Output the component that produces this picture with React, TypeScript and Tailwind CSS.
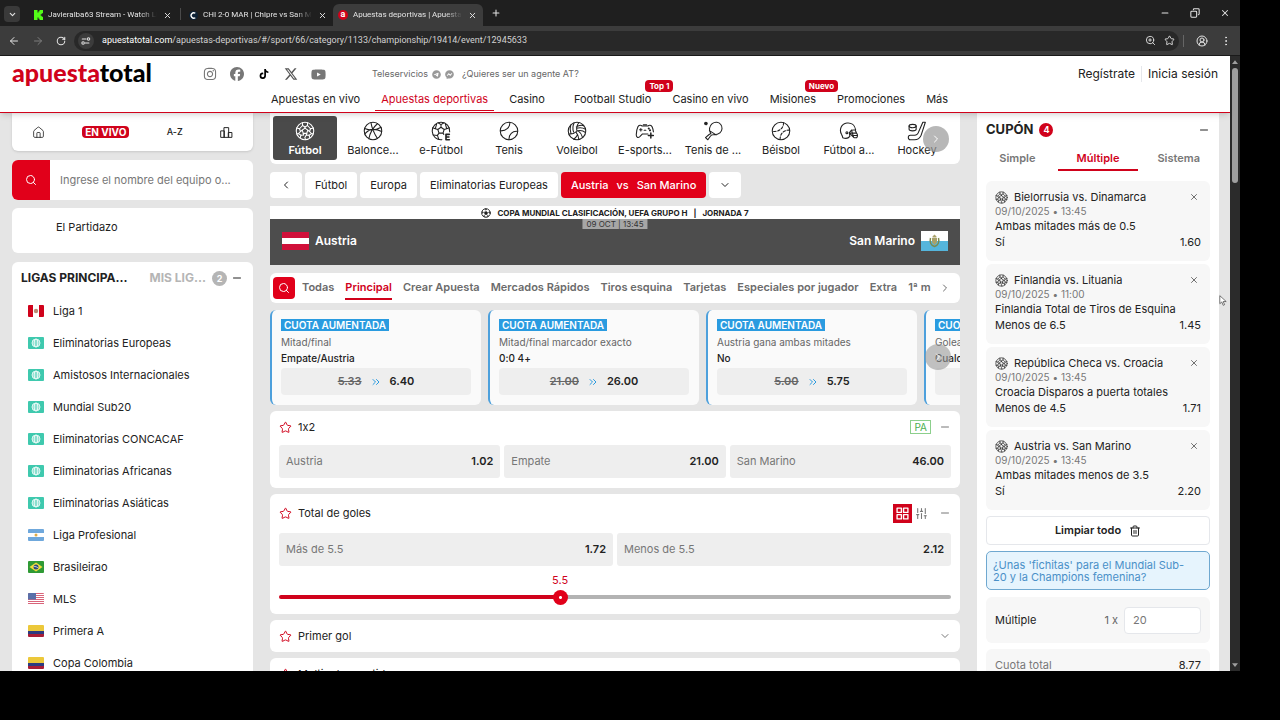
import { useState } from "react"
import type { ReactNode } from "react"
import {
  ArrowLeft,
  ArrowRight,
  ChevronDown,
  ChevronLeft,
  ChevronRight,
  ChevronsRight,
  CircleUserRound,
  Copy,
  EllipsisVertical,
  House,
  Minus,
  Plus,
  RotateCw,
  Search,
  SlidersVertical,
  Star,
  Trash2,
  X,
  ZoomIn,
} from "lucide-react"
import { FaFacebook, FaInstagram, FaTiktok, FaTelegram, FaFacebookMessenger, FaXTwitter, FaYoutube } from "react-icons/fa6"

/* ---------- Icons ---------- */

function Icon({ children, className = "size-5" }: { children: ReactNode; className?: string }) {
  return (
    <svg
      viewBox="0 0 24 24"
      fill="none"
      stroke="currentColor"
      strokeWidth="1.3"
      strokeLinecap="round"
      strokeLinejoin="round"
      className={className}
      aria-hidden="true"
    >
      {children}
    </svg>
  )
}

function BallIcon({ className = "size-5" }: { className?: string }) {
  return (
    <Icon className={className}>
      <circle cx="12" cy="12" r="10.5" />
      <path d="M12 8.600l3.300 2.400-1.200 3.800H9.900L8.700 11z" />
      <path d="M9 2.200v3.200l3 1.800 3-1.800V2.200M22 8.500l-3.400.8-1.200 3.300 2.400 2.600 2 .2M17.800 20.300l-.9-3.200-3.300-.4-1.800 3 .8 2.600M6.200 20.300l.9-3.200 3.300-.4M2 8.500l3.400.8 1.200 3.300-2.400 2.600-2 .2" />
      <path d="M12 7.200v1.400M15.300 11l2.100 1.600M14.100 14.800l-.5 1.900M9.900 14.800l.5 1.900M8.700 11l-2.100 1.600M15 5.400l3.600 3.900M9 5.400L5.400 9.300M19.800 15.200l-2.900 1.900M4.200 15.200l2.900 1.900" />
    </Icon>
  )
}

function BasketballIcon() {
  return (
    <Icon>
      <circle cx="12" cy="12" r="10.5" />
      <path d="M9.5 1.800c1 6 3.800 13 7.800 19.300M2 9c6 2.500 13 2.500 19.800-1.500M17.500 3c-5 4.500-9 10-10.500 18.300M2.200 15.500C7 9.500 14 8.500 22.300 12.500" />
    </Icon>
  )
}

function EFootballIcon() {
  return (
    <Icon>
      <path d="M13 22.400A10.500 10.500 0 1 1 22.400 13" />
      <path d="M12 7.500l3.800 2.700-1.400 4.300H9.600l-1.400-4.300zM12 7.500V4.400L8.500 2.100M12 4.400l3.500-2.300M15.800 10.200l3-1 3-1M18.800 9.200l-1.500-5.500M8.200 10.200l-3-1-3.100-1M5.200 9.200l1.500-5.500M9.600 14.500l-1.900 2.800-5-.6M7.700 17.300l1.600 4.500M14.400 14.500l1 1.500" />
      <path d="M22 16h-4v6.500h4M18 19.200h3.500" strokeWidth="2" />
    </Icon>
  )
}

function TennisIcon() {
  return (
    <Icon>
      <circle cx="12" cy="12" r="10.500" />
      <path d="M13 1.600c.5 5.500-4 10.500-11.300 10.200M22.300 12.500c-6-.8-10.800 3.500-10.300 10" />
    </Icon>
  )
}

function VolleyballIcon() {
  return (
    <Icon>
      <circle cx="12" cy="12" r="10.500" />
      <path d="M12 12c-1-4 0-7.500 2.500-10.200M12 12c4-1.200 7.500-.3 10.300 2M12 12c-2.800 3-6.300 4-9.600 3.500M8.500 2.300c-1.800 3.500-1.800 7.500-.5 11M4.500 5c-1 3-1 6.500.2 9.800M20.200 5.600c-3.200-1-6.300-.5-9 1.500M22.300 9.800c-3.500-2-7-2.200-10.800-1.200M18.800 19.900c-.8-3.200-2.500-6-5.300-8M14.200 22.300c-.2-3.800-1.400-6.600-3.400-9M8 21.700c2-1.400 3.500-3 4.500-5" />
    </Icon>
  )
}

function GamepadIcon() {
  return (
    <Icon>
      <path d="M15.500 15.500H9L5.500 19c-2 1.500-4 .5-4-2.500.2-4 1-7.500 2-9.500C4.500 5 7 4.500 8.500 6h7c1.500-1.500 4-1 5 1 .7 1.500 1.300 3.500 1.600 6M10 4.500h4M5.500 10.500h3M7 9v3M11 11h2" />
      <path d="M19 14.500v6M16 17.500h6" strokeWidth="1.800" />
      <circle cx="16.500" cy="9" r=".6" fill="currentColor" />
      <circle cx="18" cy="11.200" r=".6" fill="currentColor" />
    </Icon>
  )
}

function PingPongIcon() {
  return (
    <Icon>
      <path d="M9.500 15.500C6.500 11.500 7.500 6 11 3.200c3.500-2.700 8-2 10.300 1 2.400 3 2 7.300-1 10-2.500 2.200-5.300 2.500-8.300 2.300-1.500 0-2.300.6-3.200 1.800l-3 4.200L3 20l4-3.500c1-.8 2-1.500 2.500-1zM7.700 11.500l8 5.200" />
      <circle cx="3.500" cy="3" r="1.500" fill="currentColor" />
    </Icon>
  )
}

function BaseballIcon() {
  return (
    <Icon>
      <circle cx="12" cy="12" r="10.500" />
      <path d="M15 2c.5 6-5 11.500-13.300 10.500M22.300 11c-7-.5-11.800 4.500-11.300 11.400" strokeDasharray="3 2" />
    </Icon>
  )
}

function HelmetIcon() {
  return (
    <Icon>
      <path d="M13 18.500c-2 2.500-5.500 2.800-8.500 1.500-.2-1.500-.5-2.500-1.500-4C0 10.500 2.500 3.500 9.500 2.500c5.500-.8 9.500 2.500 10.500 8l-5 .5-2.500 3z" />
      <path d="M12.500 14.500h8.500c1.300 1.500 1.300 4 .3 5.500H18l-5-5M15 11l2.500 8.500M19.500 11l1.500 3.500M15.500 17.300h6.300" />
      <circle cx="9.500" cy="14" r="1.200" />
    </Icon>
  )
}

function HockeyIcon() {
  return (
    <Icon>
      <path d="M19 1.500h3L17 17c-1.500 4-4 5.500-8 5.500H4c-3 0-3.500-5.500 0-5.500h5c2.500 0 4-1 5-4zM2.500 6v4c0 2.500 8.500 2.500 8.500 0V6" />
      <ellipse cx="6.750" cy="6" rx="4.250" ry="2" />
    </Icon>
  )
}

/* ---------- Flags ---------- */

type FlagCode = "pe" | "int" | "ar" | "br" | "us" | "co"

function Flag({ code }: { code: FlagCode }) {
  return (
    <svg viewBox="0 0 16 12" className="w-4 h-3 shrink-0 rounded-[1px]" aria-hidden="true">
      {code === "pe" && (
        <>
          <path fill="#fff" d="M0 0h16v12H0z" />
          <path fill="#d0021b" d="M0 0h5v12H0zM11 0h5v12h-5z" />
          <circle cx="8" cy="6" r="2.200" fill="#b98c74" />
        </>
      )}
      {code === "int" && (
        <>
          <path fill="#3fc9ae" d="M0 0h16v12H0z" />
          <g fill="none" stroke="#fff" strokeWidth=".8">
            <circle cx="8" cy="6" r="4" />
            <ellipse cx="8" cy="6" rx="1.800" ry="4" />
            <path d="M4 6h8M4.600 4h6.800M4.600 8h6.800" />
          </g>
        </>
      )}
      {code === "ar" && (
        <>
          <path fill="#6fa8dc" d="M0 0h16v12H0z" />
          <path fill="#fff" d="M0 4h16v4H0z" />
          <circle cx="8" cy="6" r="1.500" fill="#e0ab45" />
        </>
      )}
      {code === "br" && (
        <>
          <path fill="#2f9a35" d="M0 0h16v12H0z" />
          <path fill="#f0dc3c" d="M8 1.500L14.500 6 8 10.500 1.500 6z" />
          <circle cx="8" cy="6" r="2.500" fill="#2b4a7d" />
          <path d="M5.700 5.400c1.600 0 3.200.4 4.500 1.600" stroke="#fff" strokeWidth=".7" fill="none" />
        </>
      )}
      {code === "us" && (
        <>
          <path fill="#fff" d="M0 0h16v12H0z" />
          <path stroke="#d9647a" strokeWidth="1" d="M0 .5h16M0 2.500h16M0 4.500h16M0 6.500h16M0 8.500h16M0 10.500h16" />
          <path fill="#5a6fa8" d="M0 0h8v6.500H0z" />
        </>
      )}
      {code === "co" && (
        <>
          <path fill="#ecc83a" d="M0 0h16v6H0z" />
          <path fill="#2d3b80" d="M0 6h16v3H0z" />
          <path fill="#a81d36" d="M0 9h16v3H0z" />
        </>
      )}
    </svg>
  )
}

/* ---------- Data ---------- */

const sports = [
  { name: "Fútbol", icon: <BallIcon /> },
  { name: "Balonce...", icon: <BasketballIcon /> },
  { name: "e-Fútbol", icon: <EFootballIcon /> },
  { name: "Tenis", icon: <TennisIcon /> },
  { name: "Voleibol", icon: <VolleyballIcon /> },
  { name: "E-sports...", icon: <GamepadIcon /> },
  { name: "Tenis de ...", icon: <PingPongIcon /> },
  { name: "Béisbol", icon: <BaseballIcon /> },
  { name: "Fútbol a...", icon: <HelmetIcon /> },
  { name: "Hockey", icon: <HockeyIcon /> },
]

const leagues: { name: string; flag: FlagCode }[] = [
  { name: "Liga 1", flag: "pe" },
  { name: "Eliminatorias Europeas", flag: "int" },
  { name: "Amistosos Internacionales", flag: "int" },
  { name: "Mundial Sub20", flag: "int" },
  { name: "Eliminatorias CONCACAF", flag: "int" },
  { name: "Eliminatorias Africanas", flag: "int" },
  { name: "Eliminatorias Asiáticas", flag: "int" },
  { name: "Liga Profesional", flag: "ar" },
  { name: "Brasileirao", flag: "br" },
  { name: "MLS", flag: "us" },
  { name: "Primera A", flag: "co" },
  { name: "Copa Colombia", flag: "co" },
]

const marketTabs = [
  "Todas",
  "Principal",
  "Crear Apuesta",
  "Mercados Rápidos",
  "Tiros esquina",
  "Tarjetas",
  "Especiales por jugador",
  "Extra",
  "1ª m",
]

const boosts = [
  { market: "Mitad/final", pick: "Empate/Austria", old: "5.33", odds: "6.40" },
  { market: "Mitad/final marcador exacto", pick: "0:0 4+", old: "21.00", odds: "26.00" },
  { market: "Austria gana ambas mitades", pick: "No", old: "5.00", odds: "5.75" },
  { market: "Goleadores", pick: "Cualquiera", old: "4.00", odds: "4.60" },
]

const selections = [
  { match: "Bielorrusia vs. Dinamarca", time: "13:45", market: "Ambas mitades más de 0.5", pick: "Sí", odds: "1.60" },
  { match: "Finlandia vs. Lituania", time: "11:00", market: "Finlandia Total de Tiros de Esquina", pick: "Menos de 6.5", odds: "1.45" },
  { match: "República Checa vs. Croacia", time: "13:45", market: "Croacia Disparos a puerta totales", pick: "Menos de 4.5", odds: "1.71" },
  { match: "Austria vs. San Marino", time: "13:45", market: "Ambas mitades menos de 3.5", pick: "Sí", odds: "2.20" },
]

/* ---------- Browser chrome ---------- */

function BrowserTab({ title, icon, active = false }: { title: string; icon: ReactNode; active?: boolean }) {
  return (
    <div className={`flex items-center gap-1 w-[150px] h-[22px] shrink-0 px-1 rounded-t-md ${active ? "bg-[#3c3c3c]" : ""}`}>
      <span className="size-3 shrink-0 flex items-center justify-center">{icon}</span>
      <span className="flex-1 overflow-hidden whitespace-nowrap text-[8px] leading-3 mask-r-from-85%">{title}</span>
      <button aria-label="Cerrar pestaña" className="px-0.5">
        <X className="size-[9px]" strokeWidth={2.5} />
      </button>
    </div>
  )
}

function BrowserChrome() {
  return (
    <div className="shrink-0 bg-[#1f1f1f] text-[#e3e3e3] font-[Roboto,sans-serif] text-[9px]">
      <div className="flex items-end h-[26px] px-1">
        <button aria-label="Buscar pestañas" className="size-4 mb-1 mr-2 rounded bg-[#3a3a3a] flex items-center justify-center">
          <ChevronDown className="size-[9px]" strokeWidth={3} />
        </button>
        <BrowserTab
          title="Javieralba63 Stream - Watch Live on Kick"
          icon={
            <svg viewBox="0 0 9 10" className="w-[9px] h-[10px]" aria-hidden="true">
              <path fill="#53fc18" d="M0 0h3.500v2.500h1V1.300h1V0H9v3.300H7.800v1H6.700v1.400h1.100v1H9V10H5.500V8.700h-1V7.500h-1V10H0z" />
            </svg>
          }
        />
        <span className="w-px h-3 mb-1.5 mx-0.5 bg-[#4a4a4a]" />
        <BrowserTab
          title="CHI 2-0 MAR | Chipre vs San Marino en vivo"
          icon={
            <svg viewBox="0 0 10 10" className="size-[9px]" aria-hidden="true">
              <circle cx="5" cy="5" r="5" fill="#0d2236" />
              <path d="M7 2.500a3 3 0 1 0 0 5" fill="none" stroke="#fff" strokeWidth="1.500" />
            </svg>
          }
        />
        <BrowserTab
          active
          title="Apuestas deportivas | Apuesta Total"
          icon={<span className="size-[10px] rounded-full bg-[#d0021b] text-white font-bold leading-[9px] text-center">a</span>}
        />
        <button aria-label="Nueva pestaña" className="p-2">
          <Plus className="size-[10px]" strokeWidth={2.5} />
        </button>
        <div className="ml-auto flex items-center gap-5 mr-1.5 mb-2">
          <Minus className="size-[10px]" strokeWidth={2.5} />
          <Copy className="size-[10px] -scale-x-100" strokeWidth={2.5} />
          <X className="size-[10px]" strokeWidth={2.5} />
        </div>
      </div>
      <div className="flex items-center h-[30px] pl-2 pr-2 bg-[#3c3c3c] border-b border-[#1a1a1a]">
        <ArrowLeft className="size-3 mr-3" />
        <ArrowRight className="size-3 mr-3 text-[#7d7d7d]" />
        <RotateCw className="size-[10px] mr-2" strokeWidth={2.5} />
        <div className="flex-1 flex items-center gap-2 h-5 pl-1 pr-1 rounded-full bg-[#282828]">
          <span className="size-4 rounded-full bg-[#3c3c3c] flex items-center justify-center">
            <Icon className="size-[10px]">
              <path strokeWidth="2.500" d="M3 7h9M19 17h-9" />
              <circle cx="18" cy="7" r="3" strokeWidth="2.500" />
              <circle cx="5" cy="17" r="3" strokeWidth="2.500" />
            </Icon>
          </span>
          <span className="flex-1 text-[#d2d2d2]">
            <span className="text-white">apuestatotal.com</span>
            /apuestas-deportivas/#/sport/66/category/1133/championship/19414/event/12945633
          </span>
          <ZoomIn className="size-[11px]" />
          <Star className="size-[11px]" />
        </div>
        <span className="w-px h-3 bg-[#666] ml-1 mr-3" />
        <CircleUserRound className="size-3" />
        <EllipsisVertical className="size-3 ml-3" />
      </div>
    </div>
  )
}

/* ---------- Header ---------- */

function NavLink({ label, active = false, badge, className = "" }: { label: string; active?: boolean; badge?: string; className?: string }) {
  return (
    <a
      href="#"
      className={`relative flex items-center h-[27px] pt-1 px-1.5 border-b whitespace-nowrap ${
        active ? "text-[#d0021b] border-[#d0021b]" : "border-transparent"
      } ${className}`}
    >
      {label}
      {badge && (
        <span className="absolute -top-1 -right-4 px-1 rounded bg-[#d0021b] text-white text-[8px] leading-3 font-bold">
          {badge}
        </span>
      )}
    </a>
  )
}

function SiteHeader() {
  return (
    <header className="relative z-10 shrink-0 bg-white pt-2 border-b border-[#d0021b] shadow-md">
      <div className="flex items-center h-5 px-3">
        <a href="#" className="w-[191px] pb-1 font-[Lato,sans-serif] font-black text-[25px] leading-5">
          <span className="text-[#d0021b]">apuesta</span>
          <span className="text-black">total</span>
        </a>
        <div className="flex items-center gap-[13px] text-[#777]">
          <FaInstagram className="size-[14px]" />
          <FaFacebook className="size-[14px]" />
          <FaTiktok className="w-[14px] h-[10px] text-black" />
          <FaXTwitter className="size-[14px] text-[#555]" />
          <FaYoutube className="size-[15px]" />
        </div>
        <div className="flex items-center gap-1 ml-[46px] text-[9px] text-[#666]">
          <span>Teleservicios</span>
          <FaTelegram className="size-[9px] text-[#999]" />
          <FaFacebookMessenger className="size-[9px] text-[#999]" />
          <a href="#" className="ml-1">¿Quieres ser un agente AT?</a>
        </div>
        <div className="flex items-center ml-auto text-[12px] leading-4">
          <a href="#" className="pr-1.5">Regístrate</a>
          <a href="#" className="pl-1.5 border-l border-gray-200">Inicia sesión</a>
        </div>
      </div>
      <nav className="flex h-7 pl-[265px] gap-[9px] text-[11px]">
        <NavLink label="Apuestas en vivo" />
        <NavLink label="Apuestas deportivas" active />
        <NavLink label="Casino" />
        <NavLink label="Football Studio" badge="Top 1" className="ml-2" />
        <NavLink label="Casino en vivo" />
        <NavLink label="Misiones" badge="Nuevo" />
        <NavLink label="Promociones" />
        <NavLink label="Más" />
      </nav>
    </header>
  )
}

/* ---------- Left column ---------- */

function Sidebar() {
  return (
    <aside className="w-[241px] shrink-0">
      <div className="flex items-center justify-between h-[38px] px-5 rounded-b-md bg-white shadow">
        <House className="size-[13px]" strokeWidth={1.5} />
        <span className="px-[3px] rounded-sm bg-[#d0021b] text-white text-[10px] leading-3 font-bold">EN VIVO</span>
        <span className="text-[9px] font-medium">A-Z</span>
        <Icon className="size-[13px]">
          <path strokeWidth="1.800" d="M2 9h6v12H2zM8 3h8v18H8zM16 12h6v9h-6z" />
        </Icon>
      </div>

      <form className="flex h-10 mt-[9px] rounded-md bg-white overflow-hidden">
        <button type="button" aria-label="Buscar" className="w-[38px] bg-[#e1001a] text-white flex items-center justify-center">
          <Search className="size-3" />
        </button>
        <input
          aria-label="Buscar equipo"
          placeholder="Ingrese el nombre del equipo o..."
          className="flex-1 min-w-0 px-2.5 text-[11px] placeholder:text-[#777] outline-none"
        />
      </form>

      <a href="#" className="block mt-2 h-[45px] pl-11 pt-[11px] rounded-md bg-white text-[11px] leading-4">
        El Partidazo
      </a>

      <div className="mt-[9px] rounded-t-md bg-white pt-2">
        <div className="flex items-center h-4 pl-[9px] pr-2.5 text-[12px] font-bold">
          <h2>LIGAS PRINCIPA...</h2>
          <span className="ml-auto text-[#b5b5b5]">MIS LIG...</span>
          <span className="size-[15px] ml-1.5 mr-1 rounded-full bg-[#b5b5b5] text-white text-[9px] leading-[15px] text-center">2</span>
          <Minus className="size-3" />
        </div>
        <ul className="pt-[9px] text-[11px]">
          {leagues.map((league) => (
            <li key={league.name}>
              <a href="#" className="flex items-center gap-[9px] h-8 pl-4">
                <Flag code={league.flag} />
                {league.name}
              </a>
            </li>
          ))}
        </ul>
      </div>
    </aside>
  )
}

/* ---------- Centre column ---------- */

function SportsBar() {
  return (
    <div className="relative flex gap-1 h-[51px] p-[3px] rounded-b-md bg-white overflow-hidden">
      {sports.map((sport, i) => (
        <button
          key={sport.name}
          className={`w-16 h-11 shrink-0 flex flex-col items-center pt-[5px] rounded-[3px] text-[11px] leading-[18px] ${
            i === 0 ? "bg-[#4a4a4a] text-white font-semibold" : ""
          }`}
        >
          {sport.icon}
          {sport.name}
        </button>
      ))}
      <button
        aria-label="Más deportes"
        className="absolute right-[11px] top-[13px] size-[26px] rounded-full bg-[#999]/70 text-white flex items-center justify-center"
      >
        <ChevronRight className="size-3" />
      </button>
    </div>
  )
}

function Breadcrumbs() {
  const crumb = "h-[26px] px-2.5 rounded bg-white flex items-center whitespace-nowrap"
  return (
    <nav className="flex gap-[3px] mt-2 text-[11px]">
      <button aria-label="Atrás" className={crumb}>
        <ChevronLeft className="size-3" />
      </button>
      <a href="#" className={crumb}>Fútbol</a>
      <a href="#" className={crumb}>Europa</a>
      <a href="#" className={crumb}>Eliminatorias Europeas</a>
      <a href="#" className="h-[26px] px-2.5 rounded bg-[#e1001a] text-white font-medium flex items-center gap-2 whitespace-nowrap">
        <span>Austria</span>
        <span>vs</span>
        <span>San Marino</span>
      </a>
      <button aria-label="Más partidos" className={crumb}>
        <ChevronDown className="size-3" />
      </button>
    </nav>
  )
}

function Scoreboard() {
  return (
    <section className="mt-2">
      <div className="flex items-center justify-center gap-1.5 h-[13px] bg-white text-[8px] font-bold">
        <Icon className="size-[10px]">
          <circle cx="12" cy="12" r="10.500" strokeWidth="2" />
          <path fill="currentColor" d="M12 8l4 3-1.500 4.500h-5L8 11zM12 2l2 2h-4zM21 9l-.5 4-2-2zM3 9l.5 4 2-2zM7 20l3 .5-2-2.500zM17 20l-3 .5 2-2.500z" />
        </Icon>
        <span>COPA MUNDIAL CLASIFICACIÓN, UEFA GRUPO H</span>
        <span>|</span>
        <span>JORNADA 7</span>
      </div>
      <div className="relative flex items-center justify-between h-[46px] px-3 bg-[#4d4d4d] text-white text-[12px] font-semibold">
        <span className="absolute top-0 left-1/2 -translate-x-1/2 px-1 bg-[#a6a6a6] text-[#333] text-[8px] leading-[10px] font-normal">
          09 OCT | 13:45
        </span>
        <div className="flex items-center gap-1.5 pb-0.5">
          <svg viewBox="0 0 27 18" className="w-[27px] h-[18px]" aria-hidden="true">
            <path fill="#d0103a" d="M0 0h27v18H0z" />
            <path fill="#fff" d="M0 6h27v6H0z" />
          </svg>
          Austria
        </div>
        <div className="flex items-center gap-1.5 pb-0.5">
          San Marino
          <svg viewBox="0 0 27 20" className="w-[27px] h-5" aria-hidden="true">
            <path fill="#fff" d="M0 0h27v10H0z" />
            <path fill="#55b5dc" d="M0 10h27v10H0z" />
            <path fill="none" stroke="#7d8a4e" strokeWidth="1.500" d="M9.500 7c-1 4 .5 7.500 4 8.500 3.500-1 5-4.500 4-8.500" />
            <path fill="#a9a16a" d="M11 7h5v4.500l-2.500 2.500-2.500-2.500zM11.500 5.500l2-2 2 2v1h-4z" />
          </svg>
        </div>
      </div>
    </section>
  )
}

function MarketTabs() {
  const [active, setActive] = useState("Principal")
  return (
    <div className="flex items-center gap-[7px] mt-2 h-[30px] px-[3px] rounded-md bg-white text-[11px] font-semibold text-[#6b6b6b]">
      <button aria-label="Buscar mercado" className="size-[22px] shrink-0 rounded-sm bg-[#e1001a] text-white flex items-center justify-center">
        <Search className="size-3" />
      </button>
      <div className="flex-1 min-w-0 flex gap-[11px] overflow-hidden">
        {marketTabs.map((tab) => (
          <button
            key={tab}
            onClick={() => setActive(tab)}
            className={`h-6 border-b-2 whitespace-nowrap ${
              tab === active ? "text-[#d0021b] border-[#d0021b]" : "border-transparent"
            }`}
          >
            {tab}
          </button>
        ))}
      </div>
      <ChevronRight className="size-3 mr-1.5 shrink-0" />
    </div>
  )
}

function Boosts() {
  return (
    <div className="relative mt-[7px] flex gap-[7px] overflow-hidden">
      {boosts.map((b) => (
        <article key={b.market} className="w-[211px] h-[95px] shrink-0 pl-[9px] pr-2.5 pt-[9px] rounded-md border-l-2 border-[#4da0dc] bg-[#fafafa]">
          <h3 className="w-fit px-[3px] bg-[#2a9be0] text-white text-[10px] leading-3 font-semibold">CUOTA AUMENTADA</h3>
          <p className="mt-[3px] text-[10px] leading-4 text-[#666] whitespace-nowrap">{b.market}</p>
          <p className="text-[10px] leading-4 font-medium whitespace-nowrap">{b.pick}</p>
          <button className="flex items-center justify-center gap-2 w-full h-[27px] mt-0.5 rounded-sm bg-[#eee] text-[11px] font-semibold">
            <s className="text-[#666]">{b.old}</s>
            <ChevronsRight className="size-3 text-[#2a9be0]" />
            <span>{b.odds}</span>
          </button>
        </article>
      ))}
      <button
        aria-label="Siguiente"
        className="absolute right-[9px] top-[34px] size-[26px] rounded-full bg-[#999]/60 text-white flex items-center justify-center"
      >
        <ChevronRight className="size-3" />
      </button>
    </div>
  )
}

function MarketCard({ title, controls, children }: { title: string; controls: ReactNode; children?: ReactNode }) {
  return (
    <section className="mt-1.5 px-[9px] rounded-md bg-white">
      <header className="flex items-center gap-1.5 min-h-8">
        <Star className="size-[13px] text-[#d0021b]" strokeWidth={1.8} />
        <h3 className="text-[11px]">{title}</h3>
        <div className="ml-auto flex items-center gap-2 text-[#777]">{controls}</div>
      </header>
      {children}
    </section>
  )
}

function OddButton({ label, odds }: { label: string; odds: string }) {
  return (
    <button className="flex-1 flex items-center justify-between h-[33px] px-[7px] rounded-[3px] bg-[#eee] text-[11px]">
      <span className="text-[#777]">{label}</span>
      <span className="font-semibold">{odds}</span>
    </button>
  )
}

function GoalsSlider() {
  const [line, setLine] = useState(5.5)
  const pct = ((line - 0.5) / 12) * 100
  return (
    <div className="pb-[15px]">
      <div className="flex px-[7px] h-[29px] items-center text-[11px] text-[#d0021b]">
        <span style={{ width: `${pct}%` }} />
        <output htmlFor="goals-line" className="-translate-x-1/2">{line.toFixed(1)}</output>
      </div>
      <input
        id="goals-line"
        type="range"
        aria-label="Línea de goles"
        min={0.5}
        max={12.5}
        step={1}
        value={line}
        onChange={(e) => setLine(Number(e.target.value))}
        style={{ background: `linear-gradient(to right, #d0021b ${pct}%, #b3b3b3 ${pct}%)` }}
        className="block w-full h-1 rounded-full appearance-none [&::-webkit-slider-thumb]:appearance-none [&::-webkit-slider-thumb]:size-[15px] [&::-webkit-slider-thumb]:rounded-full [&::-webkit-slider-thumb]:bg-[radial-gradient(circle,#fff_1px,#e1001a_2px)]"
      />
    </div>
  )
}

function Markets() {
  return (
    <>
      <MarketCard
        title="1x2"
        controls={
          <>
            <span className="px-[3px] border border-[#8ccf8c] text-[#4caf50] text-[10px] leading-3">PA</span>
            <Minus className="size-3" />
          </>
        }
      >
        <div className="flex gap-1 pt-0.5 pb-2.5">
          <OddButton label="Austria" odds="1.02" />
          <OddButton label="Empate" odds="21.00" />
          <OddButton label="San Marino" odds="46.00" />
        </div>
      </MarketCard>

      <MarketCard
        title="Total de goles"
        controls={
          <>
            <span className="flex items-center h-[38px]">
              <button aria-label="Cuadrícula" className="size-[19px] bg-[#d0021b] text-white flex items-center justify-center">
                <Icon className="size-[13px]">
                  <path strokeWidth="2.500" d="M2 2h8v8H2zM14 2h8v8h-8zM2 14h8v8H2zM14 14h8v8h-8z" />
                </Icon>
              </button>
              <button aria-label="Deslizador" className="size-[19px] flex items-center justify-center">
                <SlidersVertical className="size-[13px]" />
              </button>
            </span>
            <Minus className="size-3" />
          </>
        }
      >
        <div className="flex gap-1 pt-px">
          <OddButton label="Más de 5.5" odds="1.72" />
          <OddButton label="Menos de 5.5" odds="2.12" />
        </div>
        <GoalsSlider />
      </MarketCard>

      <MarketCard title="Primer gol" controls={<ChevronDown className="size-3" />} />
      <MarketCard title="Multigoles partido" controls={<ChevronDown className="size-3" />} />
    </>
  )
}

/* ---------- Betslip ---------- */

function Betslip() {
  const tabs = ["Simple", "Múltiple", "Sistema"]
  return (
    <aside className="w-[242px] shrink-0 px-[9px] bg-white text-[11px]">
      <header className="flex items-center gap-1.5 h-[34px]">
        <h2 className="text-[13px] font-bold">CUPÓN</h2>
        <span className="size-[14px] rounded-full bg-[#d0021b] text-white text-[9px] leading-[14px] font-bold text-center">4</span>
        <Minus className="size-3 ml-auto" />
      </header>
      <div className="flex -mx-[9px]">
        {tabs.map((tab) => (
          <button
            key={tab}
            className={`flex-1 h-6 border-b-2 font-semibold ${
              tab === "Múltiple" ? "text-[#d0021b] border-[#d0021b]" : "text-[#777] border-transparent"
            }`}
          >
            {tab}
          </button>
        ))}
      </div>

      <ul className="flex flex-col gap-[3px] mt-2.5">
        {selections.map((s) => (
          <li key={s.match} className="h-20 px-[9px] pt-2 rounded-md bg-[#f7f7f7] leading-4">
            <div className="flex items-center gap-1.5">
              <BallIcon className="size-[13px] shrink-0" />
              <span className="flex-1 whitespace-nowrap">{s.match}</span>
              <button aria-label="Quitar" className="mr-0.5">
                <X className="size-2.5 text-[#555]" />
              </button>
            </div>
            <p className="text-[10px] leading-[13px] text-[#777]">09/10/2025 • {s.time}</p>
            <p className="whitespace-nowrap">{s.market}</p>
            <p className="flex justify-between">
              <span>{s.pick}</span>
              <span>{s.odds}</span>
            </p>
          </li>
        ))}
      </ul>

      <button className="flex items-center justify-center gap-2 w-full h-[29px] mt-1.5 border border-gray-200 rounded-sm font-semibold">
        Limpiar todo
        <Trash2 className="size-3" />
      </button>

      <p className="mt-1.5 h-[39px] px-1.5 pt-[7px] rounded-[5px] border border-[#6fa8d0] bg-[#e6f4fd] leading-3 text-[#4a90c8]">
        ¿Unas 'fichitas' para el Mundial Sub-
        <br />
        20 y la Champions femenina?
      </p>

      <div className="flex items-center h-[46px] mt-[7px] px-[9px] rounded-md bg-[#f7f7f7]">
        <label htmlFor="stake" className="flex-1">Múltiple</label>
        <span className="mr-1.5 text-[#666]">1 x</span>
        <input
          id="stake"
          defaultValue="20"
          className="w-[77px] h-[27px] px-2 border border-gray-200 rounded-sm bg-white text-[#777] outline-none"
        />
      </div>

      <div className="flex justify-between h-[46px] mt-1.5 px-[9px] pt-2 rounded-md bg-[#f7f7f7] leading-4">
        <span className="text-[#777]">Cuota total</span>
        <span>8.77</span>
      </div>
    </aside>
  )
}

function PageScrollbar() {
  return (
    <div className="w-[10px] shrink-0 flex flex-col items-center bg-[#2b2b2b] py-1">
      <svg viewBox="0 0 8 5" className="w-1.5 h-1" aria-hidden="true">
        <path fill="#9f9f9f" d="M4 0l4 5H0z" />
      </svg>
      <div className="w-1.5 h-[115px] mt-1 rounded-full bg-[#9f9f9f]" />
      <svg viewBox="0 0 8 5" className="w-1.5 h-1 mt-auto" aria-hidden="true">
        <path fill="#9f9f9f" d="M4 5L0 0h8z" />
      </svg>
    </div>
  )
}

export default function App() {
  return (
    <div className="h-screen flex flex-col overflow-hidden bg-black pr-10 pb-[49px]">
      <BrowserChrome />
      <div className="relative flex-1 min-h-0 flex">
        <div className="flex-1 min-w-0 flex flex-col bg-[#e5e5e5] text-[#222] font-[Inter,sans-serif] [font-feature-settings:'calt'_0]">
          <SiteHeader />
          <main className="flex-1 min-h-0 flex gap-[17px] pl-3 pr-[11px] overflow-hidden">
            <Sidebar />
            <div className="flex-1 min-w-0">
              <SportsBar />
              <Breadcrumbs />
              <Scoreboard />
              <MarketTabs />
              <Boosts />
              <Markets />
            </div>
            <Betslip />
          </main>
        </div>
        <PageScrollbar />
        {/* Mouse pointer */}
        <svg viewBox="0 0 10 14" className="absolute right-[13px] top-[238px] z-20 w-[8px] h-[13px]" aria-hidden="true">
          <path fill="#fff" stroke="#333" strokeWidth=".8" d="M1 1v10l2.500-2.200L5.200 13l1.800-.8-1.800-3.900H9z" />
        </svg>
      </div>
    </div>
  )
}
